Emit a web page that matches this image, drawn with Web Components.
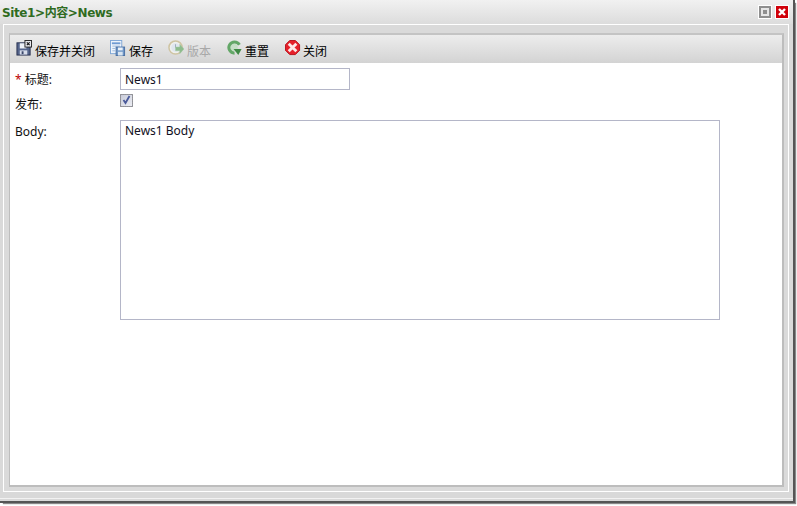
<!DOCTYPE html>
<html lang="zh"><head><meta charset="utf-8"><style>
html,body{margin:0;background:#fff;height:100%;overflow:hidden}
body{font:12px "Noto Sans","Noto Sans CJK SC",sans-serif;color:#000}
</style></head><body>
<cms-window heading="Site1&gt;内容&gt;News">
  <cms-toolbar>
    <cms-tool label="保存并关闭" icon="saveclose" style="--gap:3px;margin-left:6px;width:94px"></cms-tool>
    <cms-tool label="保存" icon="save" style="--gap:3px;width:58px"></cms-tool>
    <cms-tool label="版本" icon="version" disabled style="--gap:3px;width:59px"></cms-tool>
    <cms-tool label="重置" icon="reset" style="--gap:2px;width:58px"></cms-tool>
    <cms-tool label="关闭" icon="close" style="--gap:2px"></cms-tool>
  </cms-toolbar>
  <cms-form></cms-form>
</cms-window>
<script>
const ICONS={
saveclose:`<rect x="1" y="3" width="14" height="13" fill="#55658c" stroke="#27304f"/><rect x="4" y="3.500" width="7" height="5.500" fill="#eef1f7"/><rect x="4" y="11" width="8" height="4.500" fill="#d6dcea"/><rect x="6" y="12" width="2" height="3" fill="#39466a"/><rect x="9.500" y="0.500" width="7" height="7" fill="#e8e8ee" stroke="#222"/><path d="M11.500 2.500l3 3m0-3l-3 3" stroke="#111" stroke-width="1.200"/>`,
save:`<rect x="0.500" y="0.500" width="12" height="14" fill="#eef4fb" stroke="#7ea6d6"/><path d="M2 3.500h9" stroke="#6f9bd2" stroke-width="2"/><path d="M2.500 6.500h8M2.500 9h3M2.500 11.500h3" stroke="#9bb9dc"/><rect x="6.500" y="7.500" width="9" height="9" fill="#6f96c6" stroke="#4a70a4"/><rect x="8.500" y="8" width="5" height="3" fill="#eaf1f8"/><rect x="8.500" y="12.500" width="5" height="4" fill="#d8e4f0"/>`,
version:`<circle cx="8" cy="8" r="7" fill="#eef0ee" stroke="#cfc4a2" stroke-width="1.600"/><circle cx="8" cy="8" r="4.500" fill="#dfe6ee"/><path d="M8 4.500V8h2.500" fill="none" stroke="#9aa8b8"/><path d="M8 7.500h4.500V4.500l4.500 5-4.500 5v-3H8z" fill="#8dbc8d" stroke="#a4c8a4" stroke-width=".5"/>`,
reset:`<circle cx="7.500" cy="8" r="4" fill="#c6dfc7"/><path d="M13.200 5A6 6 0 1 0 8 14" fill="none" stroke="#63a767" stroke-width="3.200"/><path d="M7 9.500h8.500L12 16z" fill="#3f8a45"/>`,
close:`<path d="M5 .5h6L15.500 5v6L11 15.500H5L.5 11V5z" fill="#e5202a" stroke="#b5101a"/><path d="M5 5l6 6m0-6l-6 6" stroke="#fde8e8" stroke-width="3" stroke-linecap="square"/>`
};
class CmsWindow extends HTMLElement{constructor(){super();const s=this.attachShadow({mode:'open'});
s.innerHTML=`<style>
:host{display:block;box-sizing:border-box;width:797px;height:506px;padding:0 4px 5px 0;position:relative}
.win{height:100%;box-sizing:border-box;display:flex;flex-direction:column;background:#d9d9d9;box-shadow:inset 0 -2px 0 #d9d9d9,inset 0 -3px 0 #f2f2f2,1px 1px 0 1px #555,3px 3px 1px #888}
.head{height:24px;flex:none;display:flex;align-items:center;background:linear-gradient(#f1f1f1,#dcdcdc);padding:0 4px 0 2px}
.title{flex:1;font:bold 12px "DejaVu Sans","Noto Sans CJK SC",sans-serif;color:#2f6b1f;letter-spacing:-.4px;position:relative;top:-1px}
.btns{display:flex;gap:3px}
.btn{width:14px;height:14px;box-sizing:border-box;border:1px solid #fff;display:flex;align-items:center;justify-content:center}
.max{background:#8f8f8f}.max i{display:block;width:8px;height:8px;box-sizing:border-box;border:2px solid #e6e6e6;background:#8f8f8f}
.cls{background:#d0000a}
.outer{flex:1;margin:0 4px 9px 3px;border:1px solid #fff;padding:8px 4px 4px 5px;display:flex;min-height:0;background:#dadada}
.inner{flex:1;display:flex;flex-direction:column;background:#fff;border:1px solid #bdbdbd;border-top:2px solid #c4c4c4;border-right-width:2px;border-bottom-width:2px;min-width:0}
</style><div class="win"><div class="head"><span class="title"></span><span class="btns"><span class="btn max"><i></i></span><span class="btn cls"><svg width="10" height="10" viewBox="0 0 10 10"><path d="M2 2l6 6m0-6l-6 6" stroke="#fff" stroke-width="2.400"/></svg></span></span></div>
<div class="outer"><div class="inner"><slot></slot></div></div></div>`;
s.querySelector('.title').textContent=this.getAttribute('heading');}}
class CmsToolbar extends HTMLElement{constructor(){super();this.attachShadow({mode:'open'}).innerHTML=`<style>:host{display:flex;align-items:center;height:28px;flex:none;background:linear-gradient(#ededed,#d3d3d3)}</style><slot></slot>`;}}
class CmsTool extends HTMLElement{constructor(){super();const s=this.attachShadow({mode:'open'});const dis=this.hasAttribute('disabled');
s.innerHTML=`<style>:host{display:inline-flex;align-items:center;gap:var(--gap,2px);flex:none;font-size:12px;color:${dis?'#a8a8a8':'#000'}}svg{flex:none;position:relative;top:-1px}span{position:relative;top:2px}</style><svg width="16" height="16" viewBox="0 0 17 17">${ICONS[this.getAttribute('icon')]}</svg><span>${this.getAttribute('label')}</span>`;}}
class CmsForm extends HTMLElement{constructor(){super();this.attachShadow({mode:'open'}).innerHTML=`<style>
:host{display:grid;grid-template-columns:105px 1fr;grid-template-rows:26px 26px auto;padding:5px 0 0 5px;color:#111;font-size:12px}
label{line-height:20px;display:block}
b{font-weight:normal;color:#b00}
.f{box-sizing:border-box;border:1px solid #b4b6c8;padding:3px 4px;font:12px "Noto Sans","Noto Sans CJK SC",sans-serif;color:#112;background:#fff;display:block;margin:0;outline:none}
input.f{width:230px;height:22px}
textarea.f{width:600px;height:200px;resize:none;overflow:hidden;padding:1px 4px}
.c{width:13px;height:13px;box-sizing:border-box;border:1px solid #8e8f9b;outline:1px dotted #999;outline-offset:-1px;background:linear-gradient(135deg,#c8cbd8,#ecedf3);display:block}
</style>
<label style="padding-top:2px"><b>*</b>&nbsp;标题:</label><div><input class="f" value="News1"></div>
<label style="padding-top:1px">发布:</label><div><span class="c"><svg width="11" height="11" viewBox="0 0 11 11" style="display:block"><path d="M2.500 5l2 3 4-7" fill="none" stroke="#4a5a9a" stroke-width="1.800"/></svg></span></div>
<label style="padding-top:2px">Body:</label><div><textarea class="f">News1 Body</textarea></div>`;}}
customElements.define('cms-window',CmsWindow);
customElements.define('cms-toolbar',CmsToolbar);
customElements.define('cms-tool',CmsTool);
customElements.define('cms-form',CmsForm);
</script>
</body></html>
